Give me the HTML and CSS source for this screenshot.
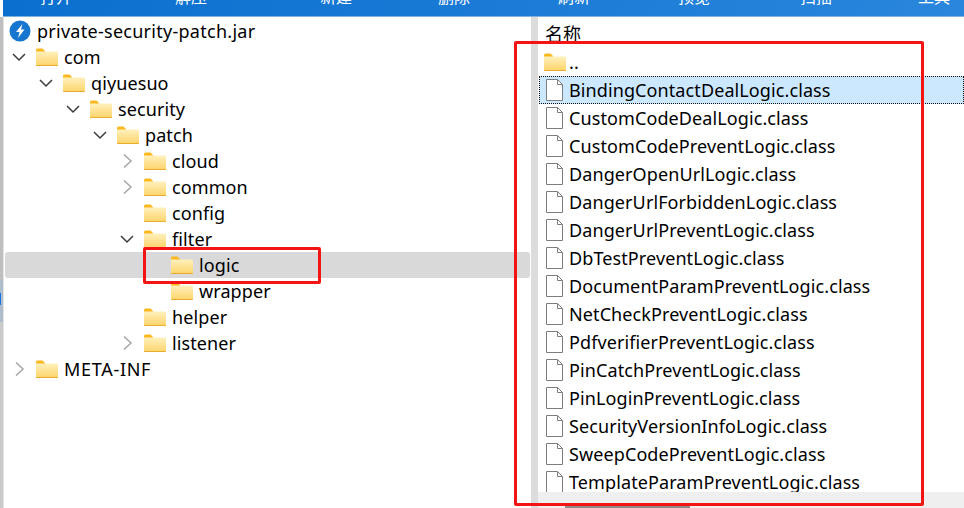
FILE: index.html
```html
<!DOCTYPE html>
<html lang="zh-CN">
  <head>
    <meta charset="UTF-8" />
    <meta name="viewport" content="width=device-width, initial-scale=1.0" />
    <title>private-security-patch.jar</title>
    <link rel="stylesheet" href="styles.css">
  </head>
  <body>
    <svg class="defs" width="0" height="0">
      <defs>
        <linearGradient id="folderFill" x1="0" y1="0" x2="0" y2="1">
          <stop offset="0" stop-color="#fff0bd" />
          <stop offset="1" stop-color="#fdd469" />
        </linearGradient>
        <symbol id="folder" viewBox="0 0 22 18">
          <path d="M0 2a1.500 1.500 0 0 1 1.500-1.500h5l2.500 2.500v2h-9z" fill="#fbb81f" />
          <path d="M0 3.500h21a1 1 0 0 1 1 1v12.500a1 1 0 0 1-1 1h-20a1 1 0 0 1-1-1z" fill="url(#folderFill)" />
          <path d="M0 17h22v.300a.700.700 0 0 1-.700.700h-20.600a.700.700 0 0 1-.700-.700z" fill="#e8ab2e" />
        </symbol>
        <symbol id="file" viewBox="0 0 17 22">
          <path d="M.5.500h11l5 5v16h-16z" fill="#fff" stroke="#7d7d7d" />
          <path d="M11.500.500v5h5" fill="none" stroke="#7d7d7d" />
        </symbol>
        <symbol id="open" viewBox="0 0 14 14">
          <path d="M1 4l6 6 6-6" fill="none" stroke="#3c3c3c" stroke-width="1.500" />
        </symbol>
        <symbol id="closed" viewBox="0 0 14 14">
          <path d="M4 .500l7 6.500-7 6.500" fill="none" stroke="#a6a6a6" stroke-width="1.500" />
        </symbol>
      </defs>
    </svg>

    <!-- toolbar, cut off by the top of the shot -->
    <header class="toolbar">
      <span class="tool t1">打开</span>
      <span class="tool t2">解压</span>
      <span class="tool t3">新建</span>
      <span class="tool t4">删除</span>
      <span class="tool t5">刷新</span>
      <span class="tool t6">预览</span>
      <span class="tool t7">扫描</span>
      <span class="tool t8">工具</span>
    </header>

    <main class="panes">
      <aside class="edge">
        <span class="edge-mark"></span>
      </aside>

      <section class="tree">
        <div class="node root">
          <svg class="jar" width="22" height="22" viewBox="0 0 22 22">
            <circle cx="11" cy="11" r="10.500" fill="#1676cf" />
            <path d="M13.500 4l-6.500 8h3.500l-1.500 6 6.500-8.500h-3.500z" fill="#fff" />
          </svg>
          <span>private-security-patch.jar</span>
        </div>
        <div class="node d1"><svg class="arrow"><use href="#open" /></svg><svg class="folder"><use href="#folder" /></svg><span>com</span></div>
        <div class="node d2"><svg class="arrow"><use href="#open" /></svg><svg class="folder"><use href="#folder" /></svg><span>qiyuesuo</span></div>
        <div class="node d3"><svg class="arrow"><use href="#open" /></svg><svg class="folder"><use href="#folder" /></svg><span>security</span></div>
        <div class="node d4"><svg class="arrow"><use href="#open" /></svg><svg class="folder"><use href="#folder" /></svg><span>patch</span></div>
        <div class="node d5"><svg class="arrow"><use href="#closed" /></svg><svg class="folder"><use href="#folder" /></svg><span>cloud</span></div>
        <div class="node d5"><svg class="arrow"><use href="#closed" /></svg><svg class="folder"><use href="#folder" /></svg><span>common</span></div>
        <div class="node d5"><i class="arrow"></i><svg class="folder"><use href="#folder" /></svg><span>config</span></div>
        <div class="node d5"><svg class="arrow"><use href="#open" /></svg><svg class="folder"><use href="#folder" /></svg><span>filter</span></div>
        <div class="node d6 current"><i class="arrow"></i><svg class="folder"><use href="#folder" /></svg><span>logic</span></div>
        <div class="node d6"><i class="arrow"></i><svg class="folder"><use href="#folder" /></svg><span>wrapper</span></div>
        <div class="node d5"><i class="arrow"></i><svg class="folder"><use href="#folder" /></svg><span>helper</span></div>
        <div class="node d5"><svg class="arrow"><use href="#closed" /></svg><svg class="folder"><use href="#folder" /></svg><span>listener</span></div>
        <div class="node d1 caps"><svg class="arrow"><use href="#closed" /></svg><svg class="folder"><use href="#folder" /></svg><span>META-INF</span></div>
      </section>

      <div class="splitter"></div>

      <section class="files">
        <div class="col-head">名称</div>
        <div class="list">
          <div class="row up"><svg class="folder"><use href="#folder" /></svg><span>..</span></div>
          <div class="row selected"><svg class="file"><use href="#file" /></svg><span>BindingContactDealLogic.class</span></div>
          <div class="row"><svg class="file"><use href="#file" /></svg><span>CustomCodeDealLogic.class</span></div>
          <div class="row"><svg class="file"><use href="#file" /></svg><span>CustomCodePreventLogic.class</span></div>
          <div class="row"><svg class="file"><use href="#file" /></svg><span>DangerOpenUrlLogic.class</span></div>
          <div class="row"><svg class="file"><use href="#file" /></svg><span>DangerUrlForbiddenLogic.class</span></div>
          <div class="row"><svg class="file"><use href="#file" /></svg><span>DangerUrlPreventLogic.class</span></div>
          <div class="row"><svg class="file"><use href="#file" /></svg><span>DbTestPreventLogic.class</span></div>
          <div class="row"><svg class="file"><use href="#file" /></svg><span>DocumentParamPreventLogic.class</span></div>
          <div class="row"><svg class="file"><use href="#file" /></svg><span>NetCheckPreventLogic.class</span></div>
          <div class="row"><svg class="file"><use href="#file" /></svg><span>PdfverifierPreventLogic.class</span></div>
          <div class="row"><svg class="file"><use href="#file" /></svg><span>PinCatchPreventLogic.class</span></div>
          <div class="row"><svg class="file"><use href="#file" /></svg><span>PinLoginPreventLogic.class</span></div>
          <div class="row"><svg class="file"><use href="#file" /></svg><span>SecurityVersionInfoLogic.class</span></div>
          <div class="row"><svg class="file"><use href="#file" /></svg><span>SweepCodePreventLogic.class</span></div>
          <div class="row"><svg class="file"><use href="#file" /></svg><span>TemplateParamPreventLogic.class</span></div>
        </div>
        <div class="hscroll"><span class="thumb"></span></div>
      </section>
    </main>

    <!-- red annotation boxes -->
    <div class="mark mark-tree"></div>
    <div class="mark mark-list"></div>
  </body>
</html>
```

FILE: styles.css
```css
* {
  box-sizing: border-box;
}

html,
body {
  height: 100%;
}

body {
  margin: 0;
  overflow: hidden;
  background: #fff;
  color: #000;
  font-family: "Noto Sans", "Noto Sans CJK SC", sans-serif;
  font-size: 18px;
  display: flex;
  flex-direction: column;
}

.defs {
  position: absolute;
}

.toolbar {
  height: 17px;
  flex: none;
  margin-left: 3px;
  background: linear-gradient(100deg, #0a6fcf, #2a86dc);
  border-bottom: 1px solid #7fb0de;
  color: #fff;
  font-size: 16px;
  display: flex;
  overflow: hidden;
}

.tool {
  display: block;
  line-height: 16px;
  margin-top: -11px;
  flex: none;
}

.t1 { margin-left: 37px; }
.t2 { margin-left: 103px; }
.t3 { margin-left: 113px; }
.t4 { margin-left: 86px; }
.t5 { margin-left: 88px; }
.t6 { margin-left: 88px; }
.t7 { margin-left: 90px; }
.t8 { margin-left: 86px; }

.panes {
  flex: 1;
  display: flex;
  min-height: 0;
}

.edge {
  width: 4px;
  flex: none;
  padding-top: 276px;
  border-right: 1px solid #e4e4e4;
  background: linear-gradient(
    #bfbfbf 0,
    #bfbfbf 263px,
    #aebccc 263px,
    #aebccc 305px,
    #cacaca 305px
  );
}

.edge-mark {
  display: block;
  width: 1px;
  height: 12px;
  background: #1a73e0;
}

.tree {
  width: 527px;
  flex: none;
  padding-top: 1px;
}

.node {
  height: 26px;
  display: flex;
  align-items: center;
  line-height: 26px;
  letter-spacing: 0.1px;
  white-space: nowrap;
}

.node .arrow {
  width: 14px;
  height: 14px;
  flex: none;
  margin-right: 10px;
}

.node .folder {
  width: 22px;
  height: 18px;
  flex: none;
  margin-right: 6px;
}

.root {
  padding-left: 5px;
  letter-spacing: 0.27px;
}

.caps {
  letter-spacing: 0.7px;
}

.jar {
  flex: none;
  margin-right: 6px;
}

.d1 { padding-left: 8px; }
.d2 { padding-left: 35px; }
.d3 { padding-left: 62px; }
.d4 { padding-left: 89px; }
.d5 { padding-left: 116px; }
.d6 { padding-left: 143px; }

.current {
  background: #d9d9d9;
  border-radius: 3px;
  margin: 0 1px;
  padding-left: 142px;
}

.splitter {
  width: 7px;
  flex: none;
  background: #dcdcdc;
}

.files {
  flex: 1;
  min-width: 0;
  display: flex;
  flex-direction: column;
}

.col-head {
  height: 31px;
  flex: none;
  padding: 5px 0 0 7px;
  line-height: 24px;
}

.list {
  flex: 1;
  min-height: 0;
  overflow: hidden;
}

.row {
  height: 28px;
  display: flex;
  align-items: center;
  padding-left: 8px;
  letter-spacing: 0.1px;
  white-space: nowrap;
}

.row .file {
  width: 17px;
  height: 22px;
  flex: none;
  margin-right: 6px;
}

.row .folder {
  width: 22px;
  height: 18px;
  flex: none;
  margin: 0 3px 0 -2px;
}

.selected {
  background: #cce8ff;
  outline: 1px dotted #111;
  outline-offset: -1px;
  margin-left: 1px;
  padding-left: 7px;
}

.hscroll {
  height: 16px;
  flex: none;
  background: #efefef;
  overflow: hidden;
}

.thumb {
  display: block;
  width: 125px;
  height: 3px;
  margin: 13px 0 0 27px;
  background: #8a8a8a;
}

.mark {
  position: absolute;
  border: 3px solid #f41414;
  border-radius: 2px;
}

.mark-tree {
  left: 143px;
  top: 247px;
  width: 178px;
  height: 37px;
}

.mark-list {
  left: 514px;
  top: 41px;
  width: 410px;
  height: 465px;
}
```
